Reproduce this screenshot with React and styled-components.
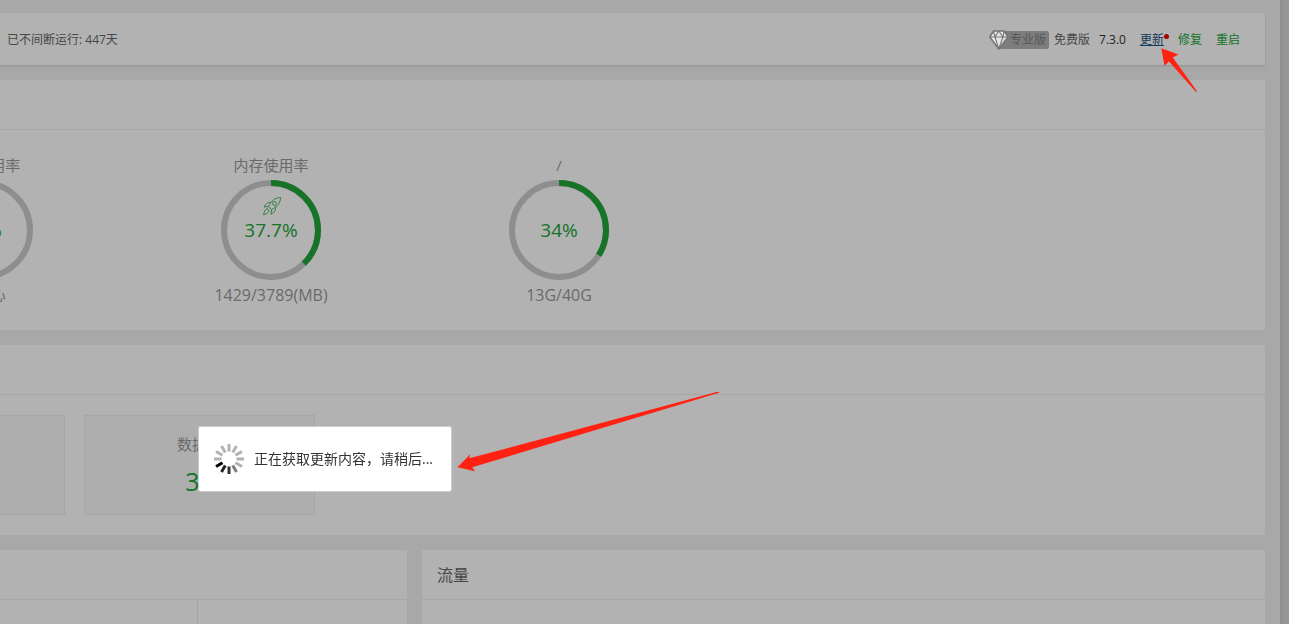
import React from "react";
import styled, { createGlobalStyle } from "styled-components";

const GlobalStyle = createGlobalStyle`
  *, *::before, *::after { box-sizing: border-box; }
  body {
    margin: 0;
    background: #f1f1f1;
    color: #666;
    font: 12px/20px "Open Sans", "Noto Sans CJK SC", sans-serif;
  }
`;

const Shell = styled.div`
  display: flex;
  min-height: 100vh;
  overflow: hidden;
`;

const Content = styled.main`
  flex: 1;
  min-width: 0;
  display: flex;
  flex-direction: column;
  gap: 15px;
  padding: 13px 15px 0 0;
`;

const ScrollTrack = styled.div`
  flex: none;
  width: 9px;
  background: linear-gradient(to right, #c8c8c8, #d6d6d6 4px);
`;

const TopBar = styled.header`
  display: flex;
  align-items: center;
  justify-content: space-between;
  height: 52px;
  padding: 2px 25px 0 7px;
  background: #fff;
  box-shadow: 0 1px 2px rgba(0, 0, 0, 0.15);
`;

const VersionInfo = styled.div`
  display: flex;
  align-items: center;
`;

const ProBadge = styled.span`
  display: flex;
  align-items: center;
  margin-right: 5px;
  color: #7c7c7c;
  svg {
    position: relative;
    z-index: 1;
    margin-right: -10px;
  }
`;

const ProLabel = styled.span`
  height: 18px;
  padding: 0 3px 0 11px;
  border-radius: 2px;
  background: #b4b4b4;
  line-height: 18px;
`;

const Version = styled.span`
  margin-left: 9px;
  color: #333;
`;

const Links = styled.nav`
  display: flex;
  gap: 14px;
  margin-left: 14px;
`;

const ActionLink = styled.a`
  position: relative;
  color: ${(p) => (p.$active ? "#23527c" : "#20a53a")};
  text-decoration: ${(p) => (p.$active ? "underline" : "none")};
`;

const Dot = styled.i`
  position: absolute;
  top: 4px;
  right: -5px;
  width: 5px;
  height: 5px;
  border-radius: 50%;
  background: #f00000;
`;

const Panel = styled.section`
  background: #fff;
  min-width: 0;
`;

const PanelHead = styled.h2`
  height: 50px;
  margin: 0;
  padding: 0 15px;
  border-bottom: 1px solid #eee;
  color: #666;
  font-size: 16px;
  font-weight: 400;
  line-height: 50px;
`;

const GaugeRow = styled.div`
  display: flex;
  height: 200px;
  padding-top: 23px;
  margin-left: -161px;
`;

const Gauge = styled.div`
  flex: 0 0 288px;
  display: flex;
  flex-direction: column;
  align-items: center;
  color: #999;
  font-size: 15px;
  line-height: 24px;
`;

const GaugeDetail = styled.span`
  font-size: 16px;
  line-height: 22px;
`;

const Ring = styled.div`
  position: relative;
  display: grid;
  place-items: center;
  width: 100px;
  height: 100px;
  margin: 3px 0 4px;
  color: #20a53a;
  font-size: 19px;
  > * { grid-area: 1 / 1; }
`;

const RocketSlot = styled.span`
  align-self: start;
  margin: 16px 0 0 2px;
  line-height: 0;
`;

const TileRow = styled.div`
  display: flex;
  gap: 19px;
  height: 140px;
  padding: 20px 0;
  margin-left: -166px;
`;

const Tile = styled.div`
  flex: 0 0 231px;
  display: flex;
  flex-direction: column;
  align-items: center;
  padding-top: 17px;
  border: 1px solid #eee;
  background: #f9f9f9;
  color: #999;
  font-size: 15px;
  line-height: 22px;
`;

const TileValue = styled.strong`
  margin-top: 8px;
  color: #20a53a;
  font-size: 25px;
  font-weight: 400;
  line-height: 36px;
`;

const BottomRow = styled.div`
  flex: 1;
  display: grid;
  grid-template-columns: 407fr 843fr;
  gap: 15px;
`;

const SplitPanel = styled(Panel)`
  display: flex;
  flex-direction: column;
`;

const Split = styled.div`
  flex: 1;
  display: grid;
  grid-template-columns: 198fr 209fr;
  > :first-child { border-right: 1px solid #e8eaee; }
`;

const Shade = styled.div`
  position: fixed;
  inset: 0;
  background: rgba(0, 0, 0, 0.3);
`;

const Dialog = styled.div`
  position: fixed;
  top: 426px;
  left: 198px;
  display: flex;
  align-items: center;
  gap: 10px;
  height: 66px;
  padding: 0 18px 0 15px;
  border: 1px solid #ccc;
  border-radius: 2px;
  background: #fff;
  background-clip: padding-box;
  color: #333;
  font-size: 14px;
  white-space: nowrap;
`;

const Arrow = styled.svg`
  position: fixed;
  top: ${(p) => p.$top}px;
  left: ${(p) => p.$left}px;
  fill: #ff2213;
  pointer-events: none;
`;

const Diamond = () => (
  <svg width="20" height="20" viewBox="0 0 20 20" fill="#e6e6e6" stroke="#757575" strokeWidth="1.5" strokeLinejoin="round">
    <path d="M4.500 1h10.500L19 7l-9.200 12L.8 7z" />
    <path d="M1 7h18M4.500 1L6 7l3.800 12L14 7l1-6M6 7l3.800-6L14 7" fill="none" strokeWidth="1.100" />
  </svg>
);

const Rocket = () => (
  <svg width="20" height="20" viewBox="0 0 20 20" fill="none" stroke="#20a53a" strokeWidth="1" strokeLinejoin="round" opacity="0.8">
    <path d="M18.500 1.500C13 1.800 9.500 4.500 6.500 10.500l3.200 3C15.500 10.500 18.500 7 18.500 1.500z" />
    <circle cx="12.500" cy="7.500" r="1.900" />
    <path d="M9 6.500C5.500 6.200 3.500 8 2 11l4.500-.5M13.700 11c.2 3.500-1.500 5.500-4.700 7.300l.7-4.800" />
    <path d="M5.300 12.500C3 13.500 2.200 15.500 1.500 18.700c3-.7 4.700-1.700 5.700-4z" />
  </svg>
);

const SPOKES = ["#b3b3b3", "#b3b3b3", "#b3b3b3", "#b0b0b0", "#b0b0b0", "#7c7c7c", "#333", "#222", "#000", "#b3b3b3", "#b3b3b3", "#b3b3b3"];

const Spinner = () => (
  <svg width="30" height="30" viewBox="0 0 30 30" strokeWidth="3" aria-hidden="true">
    {SPOKES.map((c, i) => (
      <line key={i} x1="15" y1="0" x2="15" y2="7.500" stroke={c} transform={`rotate(${i * 30} 15 15)`} />
    ))}
  </svg>
);

const RingArc = ({ percent, bare }) => (
  <svg width="100" height="100" viewBox="0 0 100 100" fill="none" strokeWidth="6">
    <circle cx="50" cy="50" r="47" stroke="#ccc" />
    {!bare && (
      <circle
        cx="50" cy="50" r="47" stroke="#20a53a" pathLength="100"
        strokeDasharray={`${percent} 100`} transform="rotate(-90 50 50)"
      />
    )}
  </svg>
);

const GAUGES = [
  { title: "CPU使用率", percent: 10, detail: "2 核心", bare: true },
  { title: "内存使用率", percent: 37.7, detail: "1429/3789(MB)", rocket: true },
  { title: "/", percent: 34, detail: "13G/40G" },
];

export default function App() {
  return (
    <>
      <GlobalStyle />
      <Shell>
        <Content>
          <TopBar>
            <span>已不间断运行: 447天</span>
            <VersionInfo>
              <ProBadge>
                <Diamond />
                <ProLabel>专业版</ProLabel>
              </ProBadge>
              <span>免费版</span>
              <Version>7.3.0</Version>
              <Links>
                <ActionLink href="#update" $active>更新<Dot /></ActionLink>
                <ActionLink href="#repair">修复</ActionLink>
                <ActionLink href="#restart">重启</ActionLink>
              </Links>
            </VersionInfo>
          </TopBar>

          <Panel>
            <PanelHead />
            <GaugeRow>
              {GAUGES.map((g) => (
                <Gauge key={g.title}>
                  <span>{g.title}</span>
                  <Ring>
                    <RingArc percent={g.percent} bare={g.bare} />
                    {g.rocket && <RocketSlot><Rocket /></RocketSlot>}
                    <span>{g.percent}%</span>
                  </Ring>
                  <GaugeDetail>{g.detail}</GaugeDetail>
                </Gauge>
              ))}
            </GaugeRow>
          </Panel>

          <Panel>
            <PanelHead />
            <TileRow>
              <Tile />
              <Tile>
                数据库
                <TileValue>30</TileValue>
              </Tile>
            </TileRow>
          </Panel>

          <BottomRow>
            <SplitPanel>
              <PanelHead />
              <Split><div /><div /></Split>
            </SplitPanel>
            <Panel>
              <PanelHead>流量</PanelHead>
            </Panel>
          </BottomRow>
        </Content>
        <ScrollTrack />
      </Shell>

      <Shade />
      <Dialog role="status">
        <Spinner />
        <span>正在获取更新内容，请稍后...</span>
      </Dialog>

      <Arrow $top={48} $left={1161} width="38" height="46" viewBox="0 0 38 46" aria-hidden="true">
        <path d="M.3.300L17.500 6.400 11.800 9.500 36 43.300 35 44 8 13.500 3.500 17.800z" />
      </Arrow>
      <Arrow $top={391} $left={457} width="264" height="82" viewBox="0 0 264 82" aria-hidden="true">
        <path d="M.4 76.300L13.300 63.300 12.300 67.300 260.500.7Q263 .6 262 1.700L15.300 76.300 18 80.300z" />
      </Arrow>
    </>
  );
}
